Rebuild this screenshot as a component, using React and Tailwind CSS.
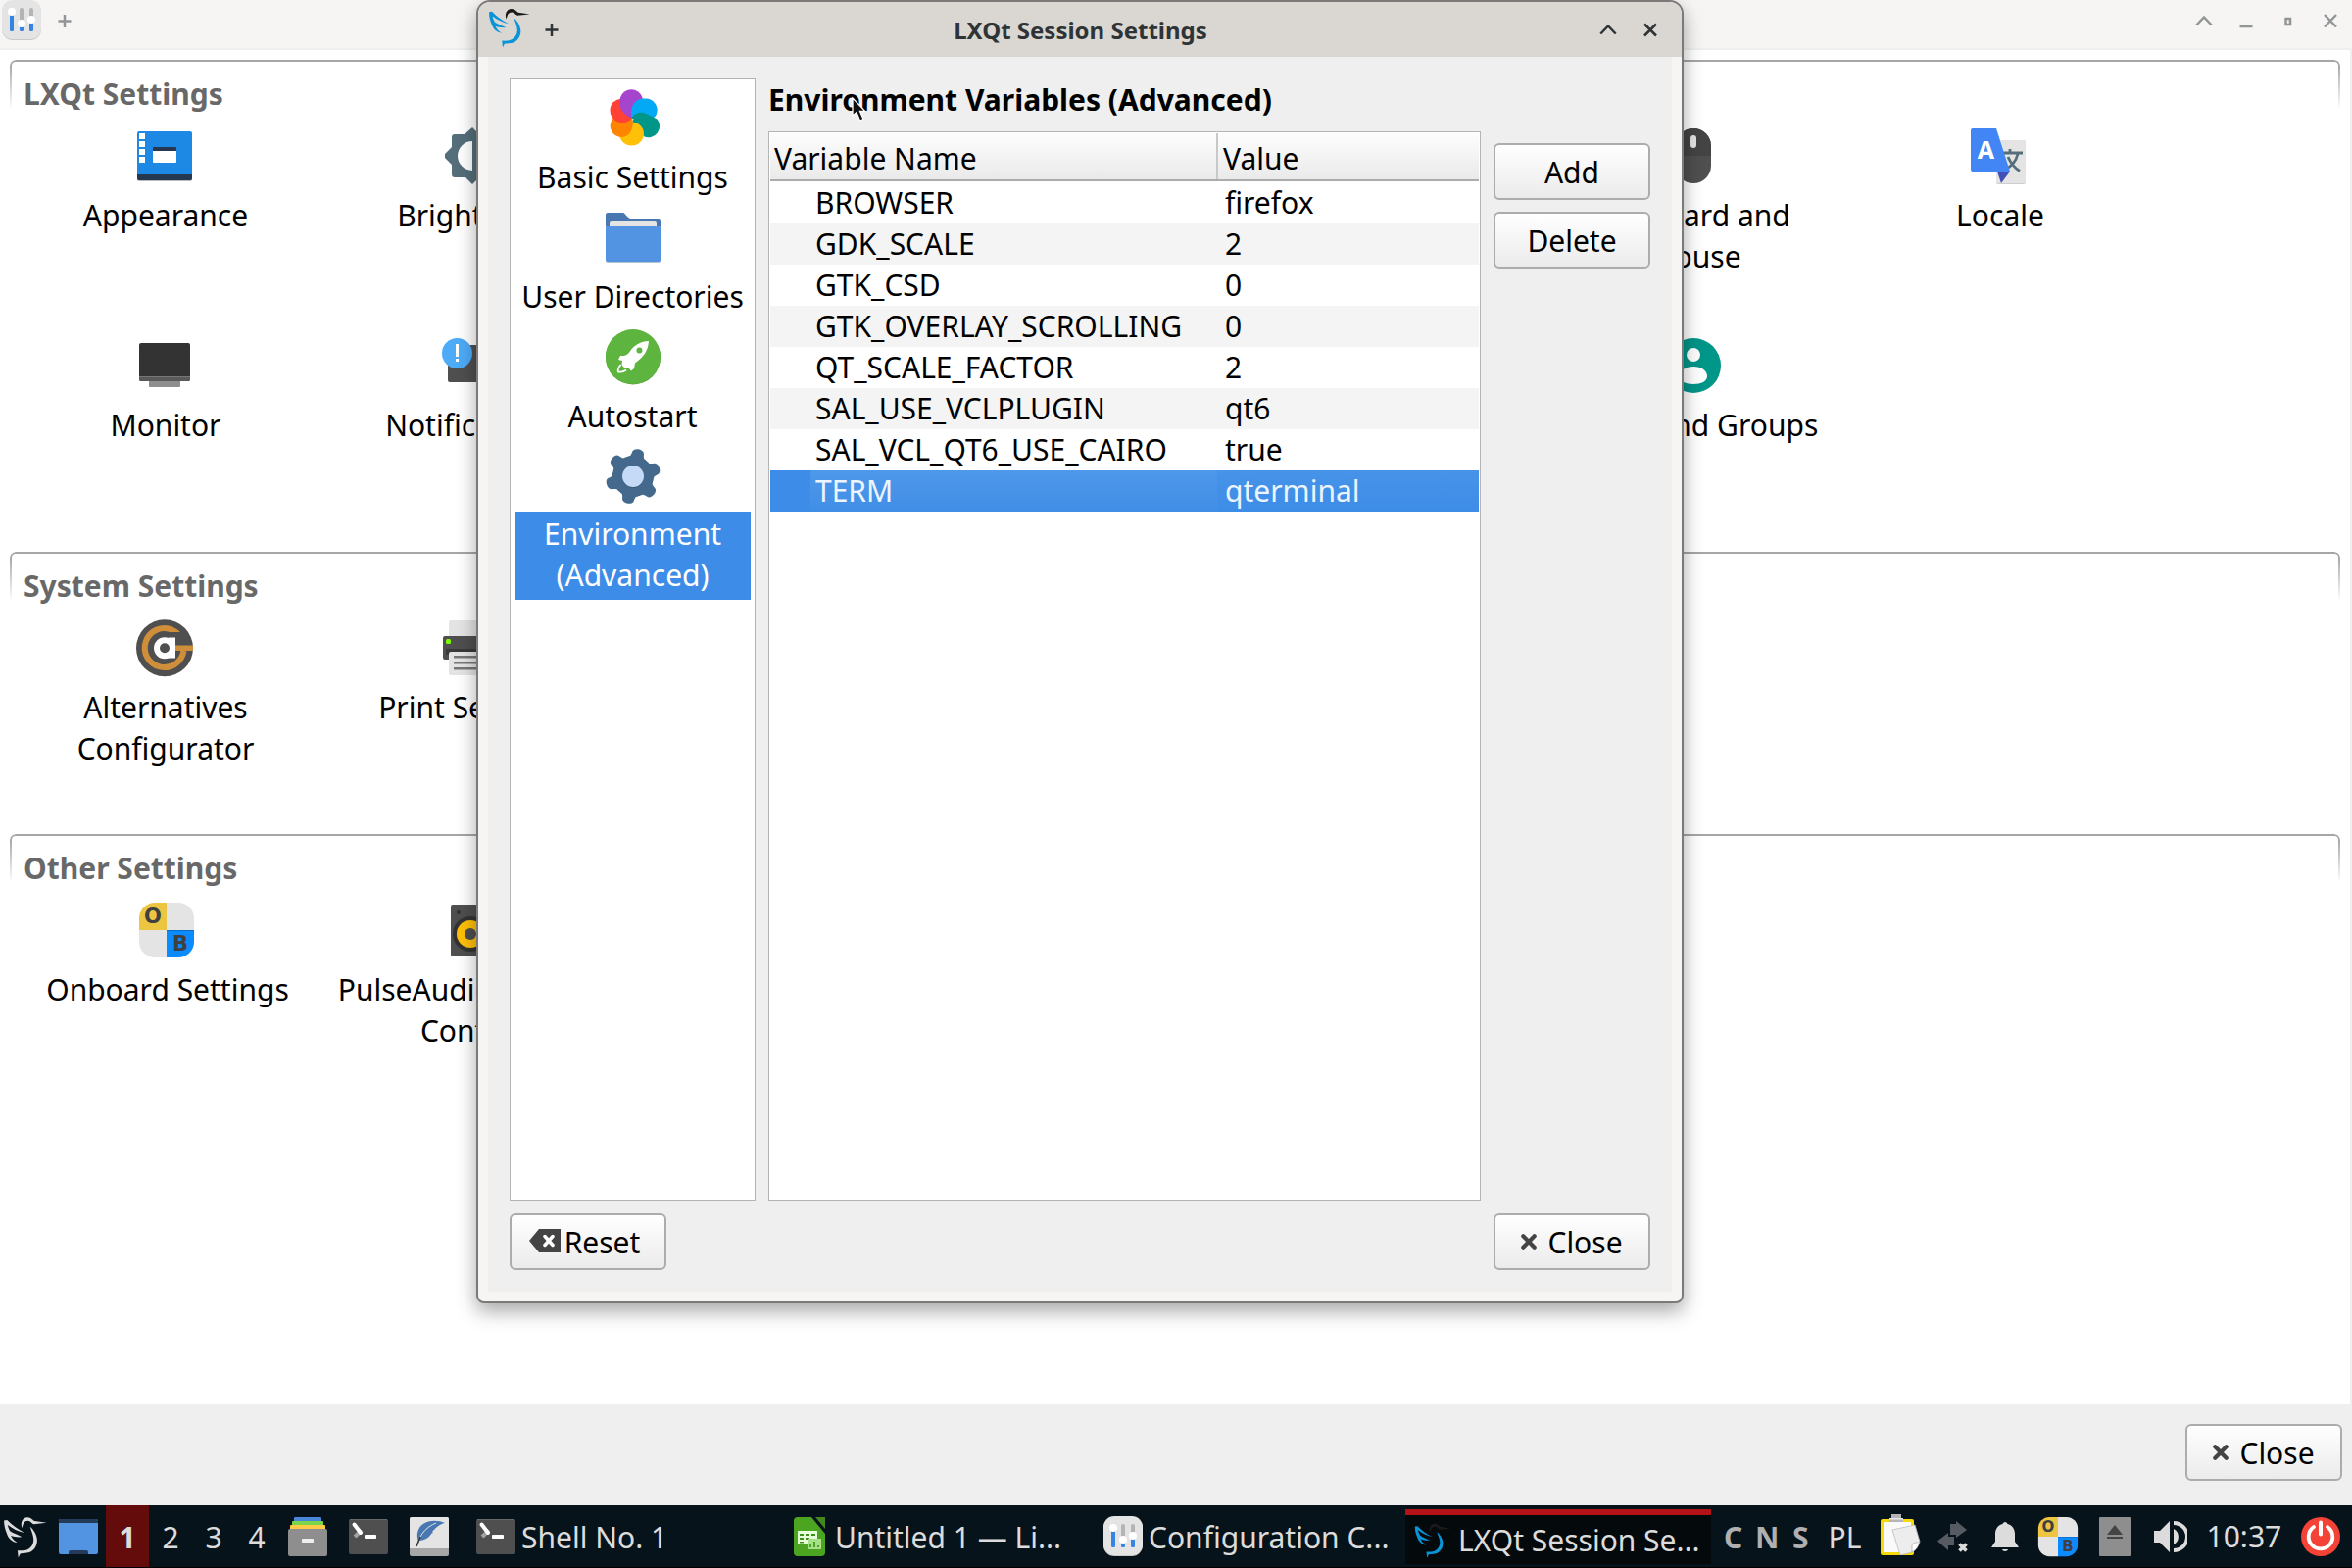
import React from "react";

/* ---------- icons ---------- */

function Bird({ size = 44, head = "#1a1a1a", body = "#0a94d8", className = "" }) {
  return (
    <svg width={size} height={size} viewBox="0 0 44 44" className={className}>
      <path fill={body} d="M2 6.3 5 5.8C10 11 16 15 22 18.2 16 17 10 14 5.6 10.5 6 13 7 15 8.2 16.8 11 18.5 16 20.5 19.5 22.3 15 22.6 11 21.8 8.6 20.8 10 24 12 26 15 27.8 10 27 6.5 24 5 19.5 3 15 2 11 2 6.3Z" />
      <path fill={body} d="M27.4 12.3C30.5 15 33.5 19 34.2 24 34.8 29 33 33.6 28.8 36.4 25 38.8 20.5 37.8 17.8 38.8L16 42.5 15.2 35.6C19 35.6 23 36 26.4 33.6 30 31 31.4 27 30.6 22.6 30 19 28.4 15.6 27.4 12.3Z" />
      <path fill={head} d="M19.8 13.6C17.6 9 19.6 3 25 3 28.6 3 30 6 32 6.8L43.6 8.4 31 9.8C29 9 28 6.6 25.4 6.4 21.6 6.4 20.4 9.6 19.8 13.6Z" />
    </svg>
  );
}

function Sliders() {
  return (
    <svg width="40" height="41" viewBox="0 0 40 41" className="shrink-0">
      <rect y="1" width="40" height="40" rx="11" fill="#c9c9c9" />
      <rect width="40" height="40" rx="11" fill="#e4e4e4" />
      <g fill="#b4b4b4">
        <rect x="18" y="8" width="4" height="16" rx="2" />
        <rect x="28" y="8" width="4" height="14" rx="2" />
      </g>
      <g fill="#3584e4">
        <rect x="8" y="12" width="4" height="20" rx="1.5" />
        <rect x="18" y="25" width="4" height="7" rx="1.5" />
        <rect x="28" y="21" width="4" height="11" rx="1.5" />
      </g>
      <g fill="#fff">
        <circle cx="10" cy="12" r="4" />
        <circle cx="20" cy="24" r="4" />
        <circle cx="30" cy="20" r="4" />
      </g>
    </svg>
  );
}

function Onboard({ className = "w-16 h-16" }) {
  return (
    <svg viewBox="0 0 64 64" className={className}>
      <path d="M32 4h12a16 16 0 0 1 16 16v12H32z" fill="#e4e4e4" />
      <path d="M32 60H20A16 16 0 0 1 4 44V32h28z" fill="#e4e4e4" />
      <path d="M32 4H20A16 16 0 0 0 4 20v12h28z" fill="#ecc640" />
      <path d="M32 60h12a16 16 0 0 0 16-16V32H32z" fill="#0a8cff" />
      <path d="M32 32h28v1H32z" fill="#0a6dc8" />
      <text x="18" y="25.4" fontSize="21" fontWeight="700" textAnchor="middle" fill="#404040" fontFamily="DejaVu Sans, sans-serif">O</text>
      <text x="46" y="53.4" fontSize="21" fontWeight="700" textAnchor="middle" fill="#404040" fontFamily="DejaVu Sans, sans-serif">B</text>
    </svg>
  );
}

const S = ({ children }) => (
  <svg width="64" height="64" viewBox="0 0 64 64">{children}</svg>
);

const Appearance = () => (
  <S>
    <rect x="4" y="8" width="56" height="50" rx="2" fill="#b8bcc0" />
    <rect x="4" y="7" width="56" height="50" rx="2" fill="#1e88e5" />
    <path d="M4 51h56v4a2 2 0 0 1-2 2H6a2 2 0 0 1-2-2z" fill="#263850" />
    <g fill="#fff">
      <rect x="6" y="9" width="6" height="6" /><rect x="6" y="17" width="6" height="6" />
      <rect x="6" y="25" width="6" height="6" /><rect x="6" y="33" width="6" height="6" />
      <rect x="20" y="24" width="24" height="15" rx="1" />
    </g>
    <path d="M20 27v-3a1 1 0 0 1 1-1h22a1 1 0 0 1 1 1v3z" fill="#263850" />
  </S>
);

const Brightness = () => (
  <S>
    <path fill="#546e7a" d="M34 3 41 10H53a2 2 0 0 1 2 2V23L62 32 55 41V52a2 2 0 0 1-2 2H41L34 61 27 54H16a3 3 0 0 1-3-3V41L6 34V30L13 23V13a3 3 0 0 1 3-3H26Z" />
    <path fill="#fff" d="M34 17a15 15 0 0 0 0 30z" />
  </S>
);

const Monitor = () => (
  <S>
    <rect x="16" y="45" width="32" height="9" rx="1" fill="#8e8e8e" />
    <rect x="6" y="9" width="52" height="39" rx="2" fill="#333" />
    <path d="M6 43h52v3a2 2 0 0 1-2 2H8a2 2 0 0 1-2-2z" fill="#5a5a5a" />
    <path d="M6 43h52v1H6z" fill="#777" />
  </S>
);

const Notify = () => (
  <S>
    <rect x="9" y="11" width="50" height="38" rx="2" fill="#4f4f4f" />
    <circle cx="18.5" cy="19.5" r="15.5" fill="#4dabf7" />
    <rect x="17" y="10" width="3" height="13" fill="#fff" />
    <rect x="17" y="25" width="3" height="3" fill="#fff" />
  </S>
);

const Mouse = () => (
  <S>
    <rect x="14" y="4" width="36" height="56" rx="18" fill="#4f4f4f" />
    <path d="M32 4a18 18 0 0 1 18 18v10H14V22A18 18 0 0 1 32 4z" fill="#444" />
    <rect x="29" y="11" width="6" height="13" rx="3" fill="#e4e4e4" />
  </S>
);

const Locale = () => (
  <S>
    <g transform="translate(3 0)">
      <rect x="26" y="16" width="30" height="45" rx="2" fill="#cfcfcf" />
      <rect x="26" y="16" width="30" height="44" rx="2" fill="#e4e4e4" />
      <path d="M32 29H53M40 25V29M48 30C46 38 42 42 34 47M38 33C41 40 46 45 50 47.5" stroke="#546e7a" strokeWidth="2.8" fill="none" />
      <path d="M27 48h13l-9 12z" fill="#3f51b5" />
      <path d="M2 4h24L40 48H2a2 2 0 0 1-2-2V6a2 2 0 0 1 2-2z" fill="#4285f4" />
      <text x="15.5" y="35" fontSize="25" fontWeight="700" textAnchor="middle" fill="#fff" fontFamily="Noto Sans, sans-serif">A</text>
    </g>
  </S>
);

const Users = () => (
  <S>
    <circle cx="32" cy="32" r="28" fill="#009688" />
    <ellipse cx="32" cy="21" rx="7" ry="7" fill="#fff" />
    <path d="M32 33c8 0 14 4 14 10 0 5-6 8-14 8s-14-3-14-8c0-6 6-10 14-10z" fill="#fff" />
  </S>
);

const Alternatives = () => (
  <S>
    <circle cx="32" cy="32.3" r="29" fill="#4f4f4f" />
    <path d="M40 13.800A20 20 0 1 0 51.500 35" fill="none" stroke="#cf8f3a" strokeWidth="6" />
    <path d="M38 10.500C42 11.500 45 13 48 16H36z" fill="#cf8f3a" />
    <path d="M42 29.500h19v5.500H42z" fill="#cf8f3a" />
    <circle cx="32" cy="32.300" r="11" fill="#fff" />
    <path d="M36 21.500h7v21h-7z" fill="#fff" />
    <circle cx="32" cy="32.300" r="5" fill="#4f4f4f" />
  </S>
);

const Printer = () => (
  <S>
    <rect x="10" y="4" width="44" height="20" rx="2" fill="#e4e4e4" />
    <rect x="4" y="20" width="56" height="24" rx="2" fill="#4f4f4f" />
    <path d="M7 33h50v6H7z" fill="#3a3a3a" />
    <rect x="10" y="36" width="44" height="24" rx="2" fill="#e4e4e4" />
    <path d="M15 40h34v2.500H15zM15 46h34v2.500H15zM15 52h34v2.500H15z" fill="#777" />
    <rect x="7" y="23" width="5" height="5" rx="1.500" fill="#7cfc00" />
  </S>
);

const Speaker = () => (
  <S>
    <rect x="12" y="6" width="40" height="53" rx="2" fill="#4f4f4f" />
    <circle cx="20" cy="14" r="2" fill="#333" />
    <circle cx="32" cy="36" r="18" fill="#333" />
    <circle cx="32" cy="36" r="14" fill="#ffc107" />
    <circle cx="32" cy="36" r="6" fill="#4f4f4f" />
  </S>
);

const Basic = () => (
  <S>
    <g transform="translate(-1.500 .5)">
      <circle cx="43" cy="39.500" r="11" fill="#009688" />
      <ellipse cx="32" cy="48" rx="12.500" ry="12" fill="#ffc107" />
      <path d="M31 27C35 34 34.500 51.500 21.500 51.500A11.500 11.500 0 0 1 16 30Z" fill="#ff8500" />
      <circle cx="21.500" cy="24" r="11.500" fill="#ff4136" />
      <path d="M32 32C27 40 12 38 10.500 26L26 18Z" fill="#ff4136" />
      <path d="M32 32C22 28 18 20 20.500 11A11.800 11.800 0 0 1 43 11C44 20 40 28 32 32Z" fill="#a544cc" />
      <path d="M32 32C30 22 34 12 45 12A12 12 0 0 1 57 29C53 36 46 26 36 28Z" fill="#03a9f4" />
      <path d="M32 32C35 26 42 24.500 48 28L58 33A11.500 11.500 0 0 1 45 51C46 44 42 36 32 32Z" fill="#009688" />
    </g>
  </S>
);

const Folder = () => (
  <S>
    <path d="M4 9a2 2 0 0 1 2-2H22c2 0 4 6 8 6H58a2 2 0 0 1 2 2V30H4z" fill="#4877b1" />
    <path d="M8 18a2 2 0 0 1 2-2H54a2 2 0 0 1 2 2v8H8z" fill="#e4e4e4" />
    <rect x="4" y="21" width="56" height="37" rx="2" fill="#b9c4d2" />
    <rect x="4" y="21" width="56" height="36" rx="2" fill="#5294e2" />
  </S>
);

const Rocket = () => (
  <S>
    <circle cx="32" cy="32.500" r="28" fill="#57a03a" />
    <circle cx="32" cy="32" r="28" fill="#5db53f" />
    <path fillRule="evenodd" fill="#fff" d="M48 16C40 16 33 20 28.500 27C26 30 24.500 31.500 19 31L17 35L21 36L20.500 40C22 43 24 44 27.500 43.500L30 46.500L33 44L34 38.500C42 33 47.500 26 48 16ZM38.500 22.500A3 3 0 1 1 38.400 28.500A3 3 0 0 1 38.500 22.500Z" />
    <path d="M19.500 40C17 43 16 45.500 17 47.500C19.500 48 22.500 47.500 25 45.500" fill="none" stroke="#fff" strokeWidth="1.800" />
  </S>
);

const Gear = () => (
  <S>
    <g fill="#44698c" transform="rotate(12 32 32)">
      <circle cx="32" cy="32" r="21" />
      {[0, 60, 120, 180, 240, 300].map((a) => (
        <path key={a} transform={`rotate(${a} 32 32)`} d="M19 15C24 15 25.500 12 26 7.500C26.500 2.500 37.500 2.500 38 7.500C38.500 12 40 15 45 15L32 30Z" />
      ))}
    </g>
    <circle cx="32" cy="33" r="11" fill="#3b5c7b" />
    <circle cx="32" cy="32" r="11" fill="#c5daf7" />
  </S>
);

const Cross = () => (
  <svg width="16" height="16" viewBox="0 0 16 16" className="mb-[3px]"><path d="M2.300 2.300 13.700 13.700M13.700 2.300 2.300 13.700" stroke="#444" strokeWidth="4.200" strokeLinecap="round" /></svg>
);

const Terminal = () => (
  <svg width="40" height="40" viewBox="0 0 40 40" className="shrink-0">
    <rect y="2" width="40" height="36" rx="2" fill="#4f4f4f" />
    <path d="M1 2h38v1H1z" fill="#686868" />
    <path d="M13 13.500 6 20" stroke="#a2a2a2" strokeWidth="4" />
    <path d="M5.500 7.500 12 16" stroke="#fff" strokeWidth="4" strokeLinecap="round" />
    <rect x="16" y="18" width="12" height="4" rx=".8" fill="#fff" />
  </svg>
);

/* ---------- pieces ---------- */

function PushButton({ children, className = "" }) {
  return (
    <div className={`flex h-[58px] w-[160px] items-center justify-center rounded-md border-2 border-[#acacac] bg-gradient-to-b from-white to-[#ebebeb] pt-[2px] leading-[42px] ${className}`}>
      {children}
    </div>
  );
}

function CloseButton() {
  return (
    <PushButton className="gap-[11px]">
      <Cross />
      <span>Close</span>
    </PushButton>
  );
}

function Item({ icon, lines, className = "" }) {
  return (
    <div className={`flex h-[214px] w-[312px] flex-col items-center ${className}`}>
      {icon}
      <div className="mt-[8px] whitespace-pre pl-[2px] text-center leading-[42px]">{lines}</div>
    </div>
  );
}

function Group({ title, height, children }) {
  return (
    <section className={`flex ${height}`}>
      <div className="h-[50px] w-[6px] shrink-0 rounded-tl-md border-l-2 border-t-2 border-[#a6a6a6] [mask-image:linear-gradient(to_bottom,black_10%,transparent)]" />
      <div className="h-full grow border-t-2 border-[#a6a6a6]">
        <h2 className="ml-[8px] mt-[12px] h-[52px] font-bold leading-[42px] text-[#686868]">{title}</h2>
        {children}
      </div>
      <div className="h-[50px] w-[6px] shrink-0 rounded-tr-md border-r-2 border-t-2 border-[#a6a6a6] [mask-image:linear-gradient(to_bottom,black_10%,transparent)]" />
    </section>
  );
}

function ControlGlyph({ d, className }) {
  return (
    <svg width="20" height="20" viewBox="0 0 20 20" className={className} fill="none" stroke="currentColor" strokeWidth="2.500"><path d={d} /></svg>
  );
}

const UP = "M2.300 14.500 10 6.500 17.700 14.500";
const X = "M4 4.500 16 16.500M16 4.500 4 16.500";
const PLUS = "M10 4V17M3.500 10.500H16.500";

function ConfigCenter() {
  return (
    <div className="flex h-[1536px] flex-col bg-[#efefef]">
      <header className="flex h-[49px] items-start bg-[#f6f5f4] pl-[2px] text-[#929595]">
        <Sliders />
        <ControlGlyph d={PLUS} className="ml-[13.500px] mt-[11px]" />
        <div className="ml-auto mt-[11px] flex gap-[23px] pr-[12px]">
          <ControlGlyph d={UP} />
          <ControlGlyph d="M3.500 16H16.500" />
          <ControlGlyph d="M7.500 8h4.500v6H7.500z" />
          <ControlGlyph d="M4 4 16 16.500M16 4 4 16.500" />
        </div>
      </header>
      <main className="mr-[2px] mt-[2px] h-[1382px] bg-white pl-[10px] pr-[10px] pt-[10px]">
        <Group title="LXQt Settings" height="h-[502px]">
          <div className="-ml-[4px] grid grid-cols-[repeat(7,312px)]">
            <Item icon={<Appearance />} lines="Appearance" />
            <Item icon={<Brightness />} lines="Brightness" />
            <Item icon={<Mouse />} lines={"Keyboard and\nMouse"} className="col-start-6" />
            <Item icon={<Locale />} lines="Locale" />
            <Item icon={<Monitor />} lines="Monitor" />
            <Item icon={<Notify />} lines=" Notifications" className="[word-spacing:-5px]" />
            <Item icon={<Users />} lines="Users and Groups" className="col-start-6" />
          </div>
        </Group>
        <Group title="System Settings" height="h-[288px]">
          <div className="-ml-[4px] flex">
            <Item icon={<Alternatives />} lines={"Alternatives\nConfigurator"} />
            <Item icon={<Printer />} lines="Print Settings" />
          </div>
        </Group>
        <Group title="Other Settings" height="h-[288px]">
          <div className="-ml-[2px] flex">
            <Item icon={<Onboard />} lines="Onboard Settings" />
            <Item icon={<Speaker />} lines={"PulseAudio Volume\nControl"} className="-ml-[2px]" />
          </div>
        </Group>
      </main>
      <footer className="flex justify-end pr-[10px] pt-[20px]">
        <CloseButton />
      </footer>
    </div>
  );
}

const VARS = [
  ["BROWSER", "firefox"],
  ["GDK_SCALE", "2"],
  ["GTK_CSD", "0"],
  ["GTK_OVERLAY_SCROLLING", "0"],
  ["QT_SCALE_FACTOR", "2"],
  ["SAL_USE_VCLPLUGIN", "qt6"],
  ["SAL_VCL_QT6_USE_CAIRO", "true"],
  ["TERM", "qterminal"],
];

function NavItem({ icon, label }) {
  return (
    <div className="flex h-[122px] flex-col items-center">
      {icon}
      <span className="mt-[8px] whitespace-nowrap leading-[42px]">{label}</span>
    </div>
  );
}

function SessionDialog() {
  return (
    <div className="absolute left-[486px] top-0 flex h-[1330px] w-[1232px] flex-col overflow-hidden rounded-b-lg rounded-t-[14px] border-2 border-[#7b7a79] bg-[#f6f5f4] shadow-[0_8px_20px_rgba(0,0,0,0.35)]">
      <header className="flex h-[56px] shrink-0 items-start bg-[#dad6d2] text-[#2e3436]">
        <Bird className="ml-[9px] mt-[4px]" />
        <ControlGlyph d={PLUS} className="ml-[12px] mt-[18px]" />
        <h1 className="mt-[13px] flex-1 pl-[1px] text-center text-[24px] font-bold leading-[32px]">LXQt Session Settings</h1>
        <ControlGlyph d={UP} className="mt-[18px]" />
        <ControlGlyph d={X} className="ml-[23px] mr-[22px] mt-[18px]" />
      </header>
      <div className="mx-[10px] mb-[10px] flex grow flex-col bg-[#efefef] px-[22px] pt-[22px]">
        <div className="flex h-[1145px]">
          <nav className="w-[251px] border border-[#b4b4b4] bg-white px-[5px] pt-[7px]">
            <NavItem icon={<Basic />} label="Basic Settings" />
            <NavItem icon={<Folder />} label="User Directories" />
            <NavItem icon={<Rocket />} label="Autostart" />
            <div className="flex flex-col items-center">
              <Gear />
              <div className="mt-[4px] h-[90px] w-[240px] bg-[#3d8ce7] pt-[2px] text-center leading-[42px] text-white">
                Environment
                <br />
                (Advanced)
              </div>
            </div>
          </nav>
          <div className="ml-[13px] flex w-[727px] flex-col">
            <h2 className="h-[54px] whitespace-nowrap pt-[1px] font-bold leading-[42px]">Environment Variables (Advanced)</h2>
            <div className="grow border border-[#b4b4b4] bg-white">
              <div className="mx-px mb-px mt-px flex h-[49px] border-b-2 border-[#ababab] bg-gradient-to-b from-[#fdfdfd] to-[#eaeaea] leading-[42px]">
                <div className="w-[457px] border-r-2 border-[#c8c8c8] pl-[4px] pt-[5px]">Variable Name</div>
                <div className="pl-[5px] pt-[5px]">Value</div>
              </div>
              {VARS.map(([name, value], i) => (
                <div key={name} className={`mx-px flex h-[42px] leading-[42px] ${i === 7 ? "bg-[#3d8ce7] text-white/90" : i % 2 ? "bg-[#f4f4f4]" : ""}`}>
                  <div className="w-[41px]" />
                  <div className={`w-[415px] pl-[5px] ${i === 7 ? "bg-gradient-to-b from-[#4f98ea] to-[#408ee6]" : ""}`}>{name}</div>
                  <div className={`grow pl-[8px] ${i === 7 ? "bg-gradient-to-b from-[#4793e9] to-[#3d8ce7]" : ""}`}>{value}</div>
                </div>
              ))}
            </div>
          </div>
          <div className="ml-[13px] mt-[66px] flex flex-col gap-3">
            <PushButton>Add</PushButton>
            <PushButton>Delete</PushButton>
          </div>
        </div>
        <div className="mt-[13px] flex justify-between">
          <PushButton className="gap-[4px] pr-[7px]">
            <svg width="32" height="24" viewBox="0 0 32 24" className="mb-[4px]">
              <path d="M0 12 10 0H32V24H10Z" fill="#444" />
              <path d="M16 7.500 24 16.500M24 7.500 16 16.500" stroke="#fff" strokeWidth="3.500" strokeLinecap="round" />
            </svg>
            <span>Reset</span>
          </PushButton>
          <CloseButton />
        </div>
      </div>
    </div>
  );
}

function Task({ icon, label, className = "" }) {
  return (
    <div className={`flex shrink-0 items-center whitespace-nowrap ${className}`}>
      {icon}
      <span className="pt-[2px]">{label}</span>
    </div>
  );
}

function Panel() {
  return (
    <footer className="flex h-16 items-center border-b border-black bg-[#07131a] leading-[42px] text-[#dcdcdc]">
      <Bird size={46} head="#dcdcdc" body="#dcdcdc" className="ml-[2px] shrink-0" />
      <svg width="40" height="36" viewBox="0 0 40 36" className="ml-[12px] shrink-0">
        <rect width="40" height="36" rx="2" fill="#5294e2" />
        <path d="M0 4V2a2 2 0 0 1 2-2h36a2 2 0 0 1 2 2v2zM10 36v-2a2 2 0 0 1 2-2h16a2 2 0 0 1 2 2v2z" fill="#233a58" />
      </svg>
      <div className="ml-[8px] flex h-full text-center leading-[66px]">
        <span className="h-full w-[44px] bg-[#640c0c] font-bold">1</span>
        <span className="w-[44px]">2</span>
        <span className="w-[44px]">3</span>
        <span className="w-[44px]">4</span>
      </div>
      <svg width="40" height="40" viewBox="0 0 40 40" className="ml-[10px] shrink-0">
        <rect x="6" width="28" height="8" rx="1" fill="#4a86d8" />
        <rect x="4" y="4" width="32" height="8" rx="1" fill="#7bd54a" />
        <rect x="2" y="8" width="36" height="8" rx="1" fill="#ffca45" />
        <rect y="12" width="40" height="28" rx="2" fill="#8e8e8e" />
        <rect x="14" y="22" width="12" height="4" rx=".8" fill="#eee" />
      </svg>
      <div className="ml-[22px] shrink-0"><Terminal /></div>
      <svg width="40" height="40" viewBox="0 0 40 40" className="ml-[22px] shrink-0">
        <rect width="40" height="40" rx="2" fill="#a6a6a6" />
        <path d="M0 2a2 2 0 0 1 2-2h36a2 2 0 0 1 2 2v30H0z" fill="#e4e4e4" />
        <path d="M36 6C27 2 13 3 9 13 7 18 8 22 9 24 15 24 20 21 22 17L24 16 23 15C26 12 30 7 36 6Z" fill="#4877b1" />
        <path d="M27 6C17 10 10 18 7 30" fill="none" stroke="#e4e4e4" strokeWidth="1" />
        <path d="M11 20 7 30" stroke="#333" strokeWidth="1.600" />
      </svg>
      <Task className="ml-[28px] w-[324px] gap-[6px]" icon={<Terminal />} label="Shell No. 1" />
      <Task
        className="w-[316px] gap-[10px]"
        icon={
          <svg width="32" height="40" viewBox="0 0 32 40" className="shrink-0">
            <path d="M4 0H18L32 17V36a4 4 0 0 1-4 4H4a4 4 0 0 1-4-4V4A4 4 0 0 1 4 0Z" fill="#4ca520" />
            <path d="M22 0H32V12Z" fill="#43881f" />
            <path d="M4 14H24V28H4Z" fill="#e6ffd8" />
            <path d="M6 17h4v2H6zM12 17h4v2h-4zM18 17h4v2h-4zM6 21h4v2H6zM12 21h4v2h-4zM6 25h4v1.500H6z" fill="#3f8f1c" />
            <rect x="14" y="22" width="14" height="11" fill="#a8e08a" />
            <path d="M16 27h2v4h-2zM20 25h2v6h-2zM24 29h2v2h-2z" fill="#4ca520" />
          </svg>
        }
        label="Untitled 1 — Li..."
      />
      <Task className="w-[308px] gap-[6px]" icon={<Sliders />} label="Configuration C..." />
      <Task className="mb-px mt-[2px] h-[56px] w-[312px] gap-[7px] border-t-[6px] border-[#b31217] bg-[#04090c] pl-[8px]" icon={<Bird size={39} />} label="LXQt Session Se..." />
      <div className="ml-[13px] flex pt-[2px] font-bold text-[#b0b0b0]">
        <span className="w-[32px]">C</span>
        <span className="w-[38px]">N</span>
        <span>S</span>
      </div>
      <span className="ml-[20px] w-[52px] shrink-0 pt-[2px]">PL</span>
      <svg width="42" height="42" viewBox="0 0 42 42" className="-mt-1 shrink-0">
        <rect x="1" y="5" width="34" height="37" rx="2" fill="#f5d90a" />
        <path d="M4 8h28v31H4z" fill="#fafafa" />
        <path d="M10 4h14v4H10zM12 0h10v5H12z" fill="#b5b5b5" />
        <path d="M10 4h14v1.500H10z" fill="#e8e8e8" />
        <path d="M13 16 36 11 41 28 33 39 21 42Z" fill="#ededed" stroke="#bdbdbd" strokeWidth=".8" />
        <path d="M41 28C38 30 34 28 33 32L33 39C37 37 40 33 41 28Z" fill="#fff" stroke="#999" strokeWidth=".6" />
      </svg>
      <svg width="32" height="32" viewBox="0 0 32 32" className="ml-[17px] shrink-0">
        <path d="M13 3h6V0L30 9 19 17V14H13Z" fill="#555b60" />
        <path d="M17 16v9h-6v5L0 20.500 11 12V16Z" fill="#555b60" />
        <path d="M22.500 23.500 29.500 30.500M29.500 23.500 22.500 30.500" stroke="#dcdcdc" strokeWidth="3.600" />
      </svg>
      <svg width="28" height="30" viewBox="0 0 28 30" className="ml-[23px] shrink-0">
        <path d="M14 0C15.500 0 16 1 16.500 2 21 3 24 7 24 12V20L28 26H0L4 20V12C4 7 7 3 11.500 2 12 1 12.500 0 14 0ZM11 28H17C16.500 30.500 11.500 30.500 11 28Z" fill="#dcdcdc" />
      </svg>
      <Onboard className="ml-[17px] h-[46px] w-[46px] shrink-0" />
      <svg width="32" height="40" viewBox="0 0 32 40" className="ml-[19px] shrink-0">
        <rect width="32" height="40" rx="1" fill="#8e8e8e" />
        <path d="M16 8 24 18H8ZM8 20H24V22H8Z" fill="#444" />
      </svg>
      <svg width="34" height="34" viewBox="0 0 34 34" className="ml-[24px] shrink-0">
        <path d="M0 11H6L16 1V33L6 23H0Z" fill="#dcdcdc" />
        <path d="M20 9A9 9 0 0 1 20 25Z" fill="#dcdcdc" />
        <path d="M20 3A14 14 0 0 1 20 31" fill="none" stroke="#dcdcdc" strokeWidth="4" />
      </svg>
      <span className="ml-[20px] w-[96px] shrink-0">10:37</span>
      <svg width="40" height="40" viewBox="0 0 40 40" className="shrink-0">
        <circle cx="20" cy="20" r="20" fill="#f44336" />
        <path d="M13 10A12.300 12.300 0 1 0 27 10" fill="none" stroke="#fff" strokeWidth="3.800" strokeLinecap="round" />
        <path d="M20 5.500V17.500" stroke="#fff" strokeWidth="4" strokeLinecap="round" />
      </svg>
    </footer>
  );
}

export default function App() {
  return (
    <div className="relative h-[1600px] w-[2400px] overflow-hidden font-['Noto_Sans',sans-serif] text-[30px] text-black">
      <ConfigCenter />
      <Panel />
      <SessionDialog />
      <svg width="20" height="28" viewBox="0 0 20 28" className="absolute left-[868px] top-[98px]">
        <path d="M2 2V20L6 16.500 9.500 25 13 23.500 9.500 15.500H15Z" fill="#111" stroke="#fff" strokeWidth="1.300" />
      </svg>
    </div>
  );
}
